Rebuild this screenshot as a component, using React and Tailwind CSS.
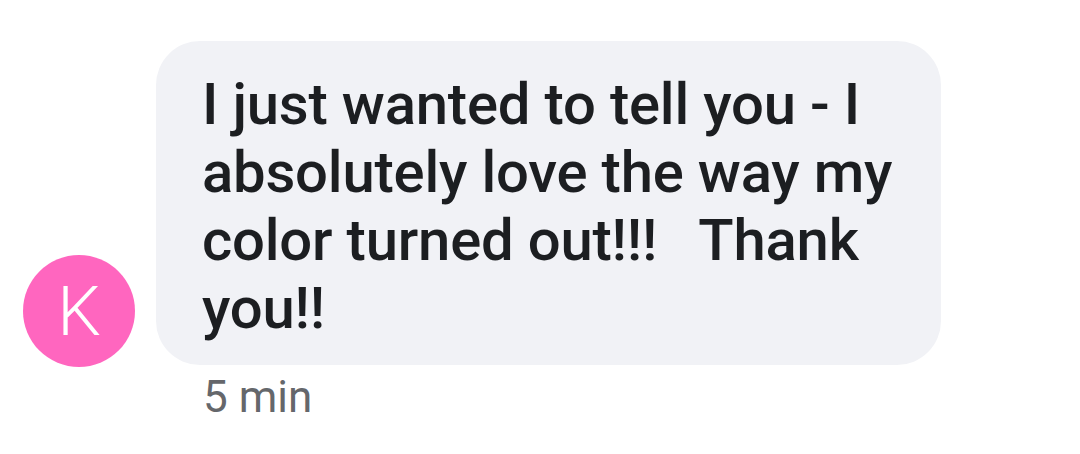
import React from 'react';

const lines = [
  'I just wanted to tell you - I',
  'absolutely love the way my',
  'color turned out!!!   Thank',
  'you!!',
];

const App = () => {
  return (
    <div className="w-[1080px] h-[454px] bg-white overflow-hidden" style={{ fontFamily: 'Roboto, "Liberation Sans", sans-serif' }}>
      <div className="flex items-end pl-[23px] pt-[41px] gap-[21px]">
        <div className="w-[112px] h-[112px] shrink-0 rounded-full bg-[#ff66bf] flex items-center justify-center mb-[-2px]">
          <span className="text-white text-[69px] font-light leading-none">K</span>
        </div>
        <div className="w-[785px] rounded-[44px] bg-[#f1f2f6] pl-[46px] pr-[20px] pt-[29px] pb-[23px]">
          <p className="text-[58px] leading-[68px] font-medium text-[#1c1e21] whitespace-pre tracking-[-0.2px]">
            {lines.map((l, i) => (
              <span key={i} className="block">{l}</span>
            ))}
          </p>
        </div>
      </div>
      <div className="pl-[203px] pt-[10px] text-[44px] leading-none text-[#65676b]">5 min</div>
    </div>
  );
};

export default App;
